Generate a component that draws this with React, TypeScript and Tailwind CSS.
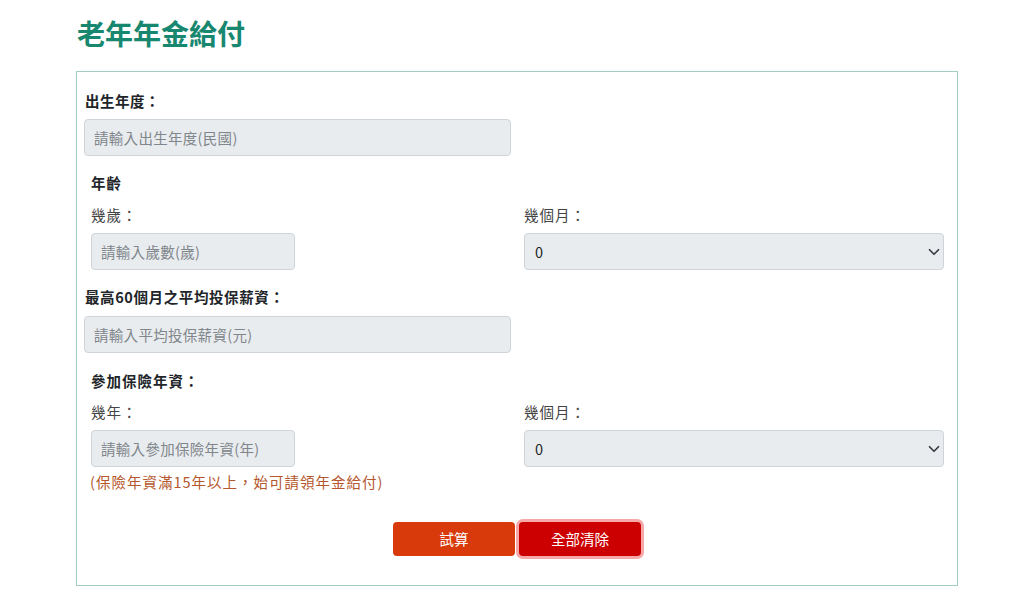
import React from "react";

const font = {
  fontFamily: '"Noto Sans CJK TC", "Noto Sans", "Liberation Sans", sans-serif',
};

function Chevron() {
  return (
    <svg width="12" height="12" viewBox="0 0 16 16" className="shrink-0">
      <path
        d="M2 5l6 6 6-6"
        fill="none"
        stroke="#343a40"
        strokeWidth="2.2"
        strokeLinecap="round"
        strokeLinejoin="round"
      />
    </svg>
  );
}

function TextInput({ placeholder, width }: { placeholder: string; width: string }) {
  return (
    <div
      className={`${width} h-[37px] bg-[#e9ecef] border border-[#ced4da] rounded-[4px] flex items-center px-[9px] text-[14.5px] text-[#80868b] tracking-[0.3px]`}
    >
      {placeholder}
    </div>
  );
}

function Select() {
  return (
    <div className="w-full h-[37px] bg-[#e9ecef] border border-[#ced4da] rounded-[4px] flex items-center justify-between pl-[10px] pr-[3px] text-[14.5px] text-[#212529]">
      <span>0</span>
      <Chevron />
    </div>
  );
}

export default function App() {
  return (
    <div className="w-[1024px] h-[600px] bg-white overflow-hidden" style={font}>
      <div className="ml-[76px] w-[882px]">
        <h1 className="pt-[14px] h-[71px] text-[28px] leading-[38px] font-bold text-[#17876f] pl-[1px]">
          老年年金給付
        </h1>

        <div className="border border-[#a3cec5] pt-[18px] pb-[29px] px-[7px]">
          {/* 出生年度 */}
          <div className="h-[21px] leading-[21px] text-[14.5px] font-bold text-[#212529] pl-[1px] tracking-[0.5px]">
            出生年度：
          </div>
          <div className="mt-[8px]">
            <TextInput placeholder="請輸入出生年度(民國)" width="w-[427px]" />
          </div>

          {/* 年齡 */}
          <div className="px-[7px]">
            <div className="mt-[16px] h-[21px] leading-[21px] text-[14.5px] font-bold text-[#212529] tracking-[1px]">
              年齡
            </div>
            <div className="mt-[11px] grid grid-cols-2 gap-[14px]">
              <div>
                <div className="h-[21px] leading-[21px] text-[14.5px] text-[#444] tracking-[1px]">
                  幾歲：
                </div>
                <div className="mt-[8px]">
                  <TextInput placeholder="請輸入歲數(歲)" width="w-[204px]" />
                </div>
              </div>
              <div>
                <div className="h-[21px] leading-[21px] text-[14.5px] text-[#444] tracking-[1px]">
                  幾個月：
                </div>
                <div className="mt-[8px] w-[420px]">
                  <Select />
                </div>
              </div>
            </div>
          </div>

          {/* 平均投保薪資 */}
          <div className="mt-[16px] h-[21px] leading-[21px] text-[14.5px] font-bold text-[#212529] pl-[1px] tracking-[0.6px]">
            最高60個月之平均投保薪資：
          </div>
          <div className="mt-[9px]">
            <TextInput placeholder="請輸入平均投保薪資(元)" width="w-[427px]" />
          </div>

          {/* 參加保險年資 */}
          <div className="px-[7px]">
            <div className="mt-[17px] h-[21px] leading-[21px] text-[14.5px] font-bold text-[#212529] tracking-[1px]">
              參加保險年資：
            </div>
            <div className="mt-[10px] grid grid-cols-2 gap-[14px]">
              <div>
                <div className="h-[21px] leading-[21px] text-[14.5px] text-[#444] tracking-[1px]">
                  幾年：
                </div>
                <div className="mt-[8px]">
                  <TextInput placeholder="請輸入參加保險年資(年)" width="w-[204px]" />
                </div>
                <div className="mt-[4px] h-[21px] leading-[21px] text-[14.5px] text-[#b5562c] -ml-[1px] tracking-[1px] whitespace-nowrap">
                  (保險年資滿15年以上，始可請領年金給付)
                </div>
              </div>
              <div>
                <div className="h-[21px] leading-[21px] text-[14.5px] text-[#444] tracking-[1px]">
                  幾個月：
                </div>
                <div className="mt-[8px] w-[420px]">
                  <Select />
                </div>
              </div>
            </div>
          </div>

          {/* Buttons */}
          <div className="mt-[30px] flex justify-center gap-[4px]">
            <button className="w-[122px] h-[34px] rounded-[4px] bg-[#d93a0b] text-white text-[14.5px]">
              試算
            </button>
            <button className="w-[122px] h-[34px] rounded-[4px] bg-[#cc0000] text-white text-[14.5px] ring-[3px] ring-[#f6a7a7]">
              全部清除
            </button>
          </div>
        </div>
      </div>
    </div>
  );
}
